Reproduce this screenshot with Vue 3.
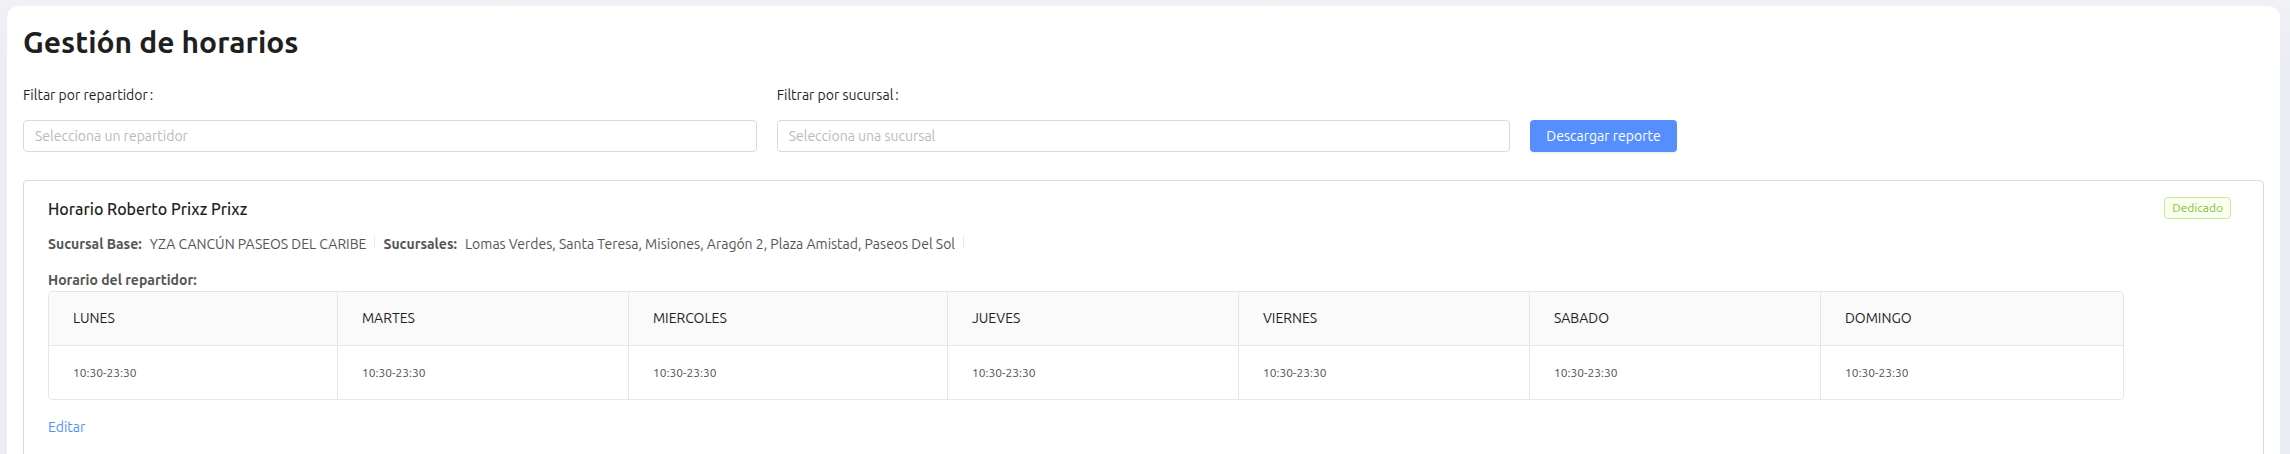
<script setup>
const schedule = [
  { day: 'LUNES', hours: '10:30-23:30', width: 13.93 },
  { day: 'MARTES', hours: '10:30-23:30', width: 14.03 },
  { day: 'MIERCOLES', hours: '10:30-23:30', width: 15.38 },
  { day: 'JUEVES', hours: '10:30-23:30', width: 14.03 },
  { day: 'VIERNES', hours: '10:30-23:30', width: 14.03 },
  { day: 'SABADO', hours: '10:30-23:30', width: 14.03 },
  { day: 'DOMINGO', hours: '10:30-23:30', width: 14.57 },
]
</script>

<template>
  <div class="page">
    <main class="panel">
      <h1>Gestión de horarios</h1>

      <form class="filters" @submit.prevent>
        <div class="field">
          <label for="repartidor">Filtar por repartidor<span class="colon">:</span></label>
          <input id="repartidor" type="text" placeholder="Selecciona un repartidor" />
        </div>
        <div class="field">
          <label for="sucursal">Filtrar por sucursal<span class="colon">:</span></label>
          <input id="sucursal" type="text" placeholder="Selecciona una sucursal" />
        </div>
        <button type="button" class="download">Descargar reporte</button>
      </form>

      <section class="card">
        <div class="card-main">
          <h2>Horario Roberto Prixz Prixz</h2>
          <ul class="meta">
            <li><strong>Sucursal Base:</strong><span>YZA CANCÚN PASEOS DEL CARIBE</span></li>
            <li>
              <strong>Sucursales:</strong>
              <span>Lomas Verdes, Santa Teresa, Misiones, Aragón 2, Plaza Amistad, Paseos Del Sol</span>
            </li>
          </ul>
          <strong id="schedule-title" class="schedule-title">Horario del repartidor:</strong>
          <div class="table-frame">
            <table aria-labelledby="schedule-title">
              <colgroup>
                <col v-for="item in schedule" :key="item.day" :style="{ width: item.width + '%' }" />
              </colgroup>
              <thead>
                <tr>
                  <th v-for="item in schedule" :key="item.day" scope="col">{{ item.day }}</th>
                </tr>
              </thead>
              <tbody>
                <tr>
                  <td v-for="item in schedule" :key="item.day">{{ item.hours }}</td>
                </tr>
              </tbody>
            </table>
          </div>
          <a href="#editar" class="edit">Editar</a>
        </div>
        <span class="tag">Dedicado</span>
      </section>
    </main>
  </div>
</template>

<style>
body {
  margin: 0;
  background: #ebedf4;
}
</style>

<style scoped>
.page {
  box-sizing: border-box;
  height: 100vh;
  overflow: hidden;
  padding: 6px 10px 0 7px;
  background: linear-gradient(#f0f1f5, #ebedf4 60px);
  color: #1f1f1f;
  font-family: Ubuntu, "Noto Sans", sans-serif;
  font-size: 14px;
  line-height: 22px;
}
.panel {
  box-sizing: border-box;
  min-height: 100%;
  padding: 16px;
  border-radius: 12px;
  background: #fff;
}
h1 {
  margin: 0 0 22px;
  font-size: 30px;
  line-height: 40px;
  font-weight: 700;
}
.filters {
  display: grid;
  grid-template-columns: repeat(3, 1fr);
  align-items: end;
  gap: 20px;
  margin-bottom: 28px;
}
.field {
  display: flex;
  flex-direction: column;
  gap: 14px;
}
.colon {
  margin-left: 2px;
}
input {
  box-sizing: border-box;
  width: 100%;
  height: 32px;
  padding: 4px 11px;
  border: 1px solid #d9d9d9;
  border-radius: 4px;
  background: #fff;
  color: inherit;
  font: inherit;
}
input::placeholder {
  color: #bababa;
  opacity: 1;
}
.download {
  justify-self: start;
  height: 32px;
  padding: 0 16px;
  border: 0;
  border-radius: 4px;
  background: #568ffd;
  box-shadow: 0 2px 0 rgba(0, 0, 0, 0.04);
  color: #fff;
  font: inherit;
}
.card {
  display: flex;
  align-items: flex-start;
  gap: 40px;
  padding: 16px 24px 32px;
  border: 1px solid #d9d9d9;
  border-radius: 4px;
}
.card-main {
  flex: 1;
  min-width: 0;
}
h2 {
  margin: 0 0 12px;
  font-size: 16px;
  line-height: 24px;
  font-weight: 500;
}
.meta {
  display: flex;
  flex-wrap: wrap;
  margin: 0 0 14px;
  padding: 0;
  list-style: none;
  color: #555;
}
.meta li {
  display: flex;
  align-items: center;
  gap: 8px;
  padding-right: 8px;
}
.meta li::after {
  content: "";
  width: 1px;
  height: 12px;
  margin-bottom: 4px;
  background: #e8e8e8;
}
.schedule-title {
  display: block;
  color: #555;
}
.table-frame {
  overflow: hidden;
  margin-bottom: 16px;
  border: 1px solid #e6e6e6;
  border-radius: 4px;
}
table {
  width: 100%;
  table-layout: fixed;
  border-collapse: separate;
  border-spacing: 0;
}
th,
td {
  padding: 16px 24px;
  border-right: 1px solid #e6e6e6;
  line-height: 21px;
  text-align: left;
}
th {
  border-bottom: 1px solid #e6e6e6;
  background: #fafafa;
  font-weight: 400;
}
td {
  color: #505050;
  font-size: 12px;
}
th:last-child,
td:last-child {
  border-right: 0;
}
.edit {
  color: #568ffd;
  text-decoration: none;
}
.tag {
  margin-right: 8px;
  padding: 0 7px;
  border: 1px solid #c6ec93;
  border-radius: 4px;
  background: #fbffef;
  color: #7cc234;
  font-size: 12px;
  line-height: 20px;
}
</style>
